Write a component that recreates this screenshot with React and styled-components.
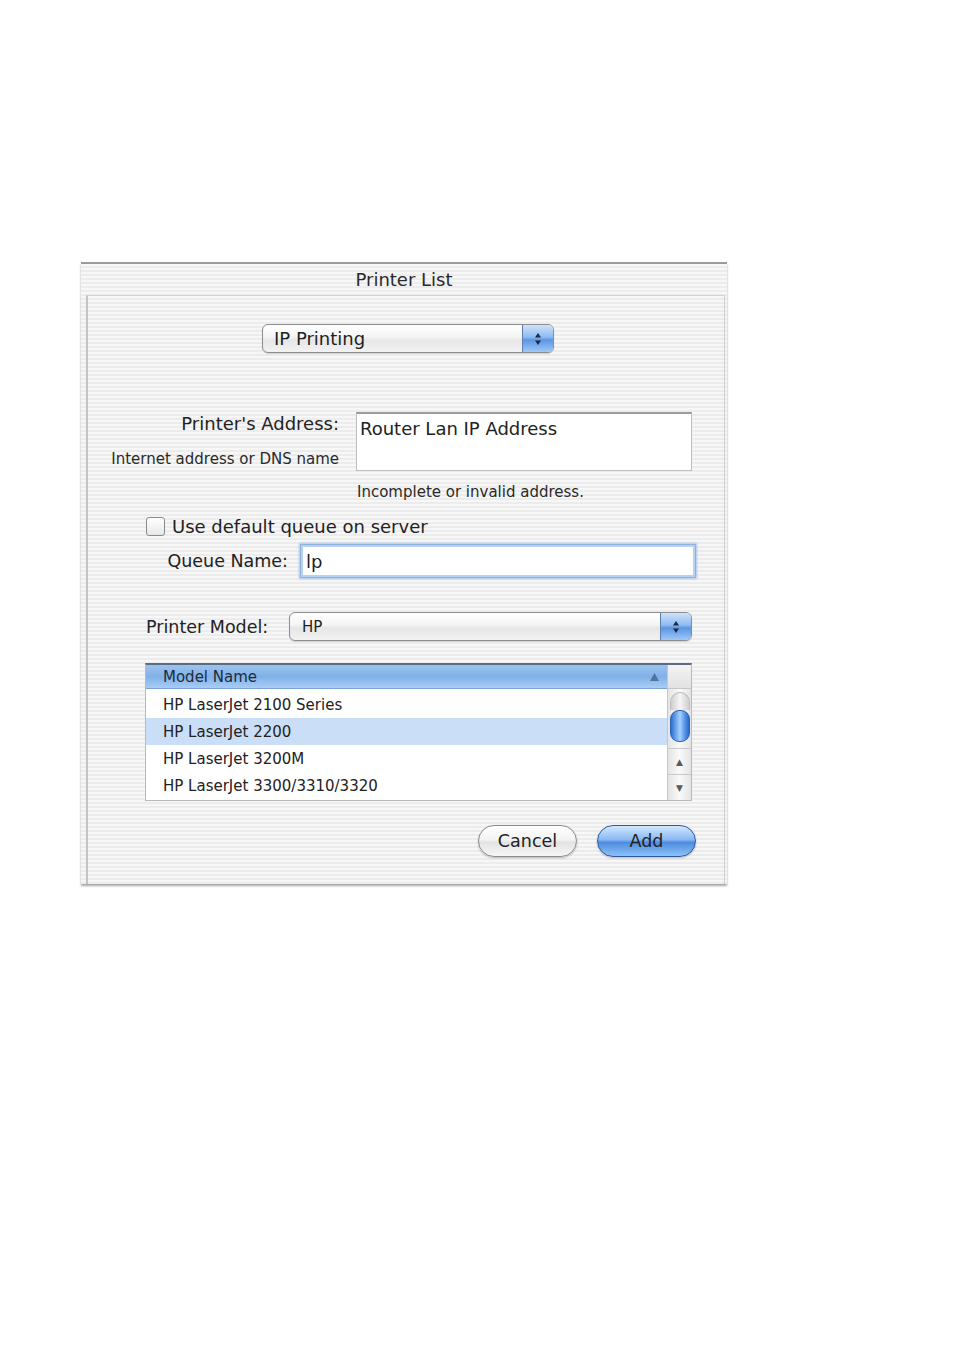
import React from "react";
import styled, { createGlobalStyle } from "styled-components";

const Global = createGlobalStyle`
  html, body { margin: 0; padding: 0; background: #ffffff; }
  body { font-family: "DejaVu Sans", "Liberation Sans", sans-serif; color: #1e1e1e; }
`;

const pinstripe = `repeating-linear-gradient(180deg, #f7f7f7 0px, #f7f7f7 2px, #ececec 2px, #ececec 4px)`;

const Page = styled.div`
  width: 954px;
  height: 1355px;
  padding-top: 262px;
  padding-left: 81px;
  box-sizing: border-box;
`;

const Window = styled.div`
  width: 646px;
  background: ${pinstripe};
  border-top: 2px solid #9a9a9a;
  box-shadow: 0 2px 2px rgba(0,0,0,0.35);
  display: flex;
  flex-direction: column;
`;

const TitleBar = styled.div`
  height: 31px;
  display: flex;
  align-items: center;
  justify-content: center;
  font-size: 18px;
  color: #2a2a2a;
  box-sizing: border-box;
`;

const Sheet = styled.div`
  margin: 0 2px 0 5px;
  border-left: 2px solid #c4c4c4;
  border-right: 1px solid #cfcfcf;
  border-top: 1px solid #d2d2d2;
  display: flex;
  flex-direction: column;
  padding-bottom: 27px;
`;

const PopupRow = styled.div`
  display: flex;
  margin-top: ${p => p.$top}px;
  padding-left: ${p => p.$left}px;
`;

const Popup = styled.div`
  width: ${p => p.$w}px;
  height: 29px;
  box-sizing: border-box;
  border: 1px solid #8d8d8d;
  border-radius: 6px;
  background: linear-gradient(180deg, #ffffff 0%, #f4f4f4 45%, #e6e6e6 55%, #f2f2f2 100%);
  display: flex;
  align-items: center;
  font-size: ${p => p.$fs || 18}px;
  padding-left: ${p => p.$pl || 11}px;
  overflow: hidden;
  box-shadow: 0 1px 1px rgba(0,0,0,0.15);
`;

const PopupText = styled.span`
  flex: 1;
`;

const Stepper = styled.div`
  width: 30px;
  height: 100%;
  border-left: 1px solid #5a7fb0;
  background: linear-gradient(180deg, #cfe3fb 0%, #8fbaf0 45%, #5b95e2 55%, #9fc8f6 100%);
  display: flex;
  align-items: center;
  justify-content: center;
`;

const AddressGroup = styled.div`
  display: flex;
  margin-top: 59px;
`;

const LabelCol = styled.div`
  width: ${p => p.$w}px;
  display: flex;
  flex-direction: column;
  align-items: flex-end;
  margin-right: ${p => p.$gap}px;
`;

const Label = styled.div`
  font-size: 18px;
  line-height: 24px;
  color: #222;
  white-space: nowrap;
`;

const SmallLabel = styled.div`
  font-size: 15px;
  line-height: 18px;
  color: #2a2a2a;
  white-space: nowrap;
  margin-top: ${p => p.$top || 0}px;
  padding-left: ${p => p.$left || 0}px;
`;

const TextArea = styled.div`
  width: 336px;
  height: 59px;
  box-sizing: border-box;
  background: #fff;
  border: 1px solid #bdbdbd;
  border-top: 2px solid #9c9c9c;
  font-size: 18px;
  padding: 4px 0 0 3px;
  color: #222;
`;

const CheckRow = styled.div`
  display: flex;
  align-items: center;
  margin-top: 16px;
  padding-left: 58px;
  height: 19px;
`;

const CheckBox = styled.div`
  width: 19px;
  height: 19px;
  box-sizing: border-box;
  border: 1px solid #8a8a8a;
  border-radius: 3px;
  background: linear-gradient(180deg, #ffffff, #e8e8e8);
  margin-right: 7px;
`;

const CheckText = styled.span`
  font-size: 18px;
  color: #222;
`;

const FieldRow = styled.div`
  display: flex;
  align-items: center;
  margin-top: ${p => p.$top}px;
  padding-left: ${p => p.$left || 0}px;
`;

const RightLabel = styled.div`
  width: ${p => p.$w}px;
  text-align: ${p => p.$align || "right"};
  margin-right: ${p => p.$gap}px;
  font-size: ${p => p.$fs || 18}px;
  color: #222;
  white-space: nowrap;
`;

const FocusField = styled.div`
  width: 396px;
  height: 34px;
  box-sizing: border-box;
  background: #fff;
  border: 1px solid #8fb2dd;
  box-shadow: inset 0 0 0 2px #b7d2f1, 0 0 2px 1px #a9c6ea;
  font-size: 18px;
  display: flex;
  align-items: center;
  padding-left: 5px;
  color: #222;
`;

const Table = styled.div`
  margin-top: 22px;
  margin-left: 57px;
  width: 547px;
  height: 138px;
  box-sizing: border-box;
  border: 1px solid #b9b9b9;
  border-top: 2px solid #5b6d85;
  display: grid;
  grid-template-columns: 1fr 24px;
  grid-template-rows: 24px 1fr;
  background: #fff;
`;

const HeaderCell = styled.div`
  background: linear-gradient(180deg, #9cc3ee 0%, #80b1e8 50%, #a9cdf4 100%);
  border-bottom: 1px solid #7aa3d4;
  display: flex;
  align-items: center;
  padding-left: 17px;
  padding-right: 8px;
  font-size: 15px;
  color: #1f2a38;
`;

const HeaderText = styled.span`
  flex: 1;
`;

const Corner = styled.div`
  background: linear-gradient(180deg, #f4f4f4, #e2e2e2);
  border-left: 1px solid #c7c7c7;
  border-bottom: 1px solid #c7c7c7;
`;

const Rows = styled.div`
  display: flex;
  flex-direction: column;
  padding-top: 2px;
`;

const Row = styled.div`
  height: 27px;
  display: flex;
  align-items: center;
  padding-left: 17px;
  font-size: 15px;
  color: #222;
  background: ${p => (p.$sel ? "#cadff7" : "#ffffff")};
`;

const ScrollBar = styled.div`
  border-left: 1px solid #c7c7c7;
  background: linear-gradient(90deg, #e4e4e4, #fafafa 50%, #e4e4e4);
  display: flex;
  flex-direction: column;
`;

const Track = styled.div`
  flex: 1;
  display: flex;
  flex-direction: column;
  align-items: center;
  padding-top: 3px;
`;

const TrackCap = styled.div`
  width: 20px;
  height: 18px;
  border-radius: 10px 10px 0 0;
  background: linear-gradient(90deg, #cfcfcf, #f6f6f6 50%, #cfcfcf);
  border: 1px solid #bdbdbd;
  border-bottom: none;
  box-sizing: border-box;
`;

const Thumb = styled.div`
  width: 20px;
  height: 32px;
  border-radius: 9px;
  box-sizing: border-box;
  border: 1px solid #2d62b6;
  background: linear-gradient(90deg, #2f6fd0 0%, #7fb4f3 35%, #a8d0fb 50%, #5d99e8 75%, #2a67c7 100%);
`;

const ArrowBtn = styled.div`
  height: 25px;
  display: flex;
  align-items: center;
  justify-content: center;
  border-top: 1px solid #c9c9c9;
  font-size: 9px;
  color: #5a5a5a;
`;

const ButtonRow = styled.div`
  display: flex;
  justify-content: flex-end;
  gap: 20px;
  margin-top: 24px;
  padding-right: 28px;
`;

const PillButton = styled.div`
  width: 99px;
  height: 32px;
  box-sizing: border-box;
  border-radius: 16px;
  display: flex;
  align-items: center;
  justify-content: center;
  font-size: 17.5px;
  color: #222;
  border: 1px solid ${p => (p.$primary ? "#2e5a9c" : "#8c8c8c")};
  background: ${p =>
    p.$primary
      ? "linear-gradient(180deg, #d2e7ff 0%, #8ab9f0 45%, #4f8ce0 55%, #8cc1f7 100%)"
      : "linear-gradient(180deg, #ffffff 0%, #f3f3f3 45%, #e3e3e3 55%, #f7f7f7 100%)"};
  box-shadow: 0 1px 2px rgba(0,0,0,0.25);
`;

const StepIcon = () => (
  <svg width="10" height="16" viewBox="0 0 10 16">
    <path d="M5 2 L8 6.5 L2 6.5 Z" fill="#1d2b40" />
    <path d="M5 14 L8 9.5 L2 9.5 Z" fill="#1d2b40" />
  </svg>
);

const models = [
  { name: "HP LaserJet 2100 Series" },
  { name: "HP LaserJet 2200", sel: true },
  { name: "HP LaserJet 3200M" },
  { name: "HP LaserJet 3300/3310/3320" },
];

export default function App() {
  return (
    <>
      <Global />
      <Page>
        <Window>
          <TitleBar>Printer List</TitleBar>
          <Sheet>
            <PopupRow $top={28} $left={174}>
              <Popup $w={292}>
                <PopupText>IP Printing</PopupText>
                <Stepper><StepIcon /></Stepper>
              </Popup>
            </PopupRow>

            <AddressGroup>
              <LabelCol $w={251} $gap={17}>
                <Label>Printer's Address:</Label>
                <SmallLabel $top={14}>Internet address or DNS name</SmallLabel>
              </LabelCol>
              <TextArea>Router Lan IP Address</TextArea>
            </AddressGroup>
            <SmallLabel $top={12} $left={269}>Incomplete or invalid address.</SmallLabel>

            <CheckRow>
              <CheckBox />
              <CheckText>Use default queue on server</CheckText>
            </CheckRow>

            <FieldRow $top={8}>
              <RightLabel $w={200} $gap={12} $fs={17.5}>Queue Name:</RightLabel>
              <FocusField>lp</FocusField>
            </FieldRow>

            <FieldRow $top={34} $left={58}>
              <RightLabel $w={143} $gap={0} $align="left" $fs={17.5}>Printer Model:</RightLabel>
              <Popup $w={403} $fs={15} $pl={12}>
                <PopupText>HP</PopupText>
                <Stepper><StepIcon /></Stepper>
              </Popup>
            </FieldRow>

            <Table>
              <HeaderCell>
                <HeaderText>Model Name</HeaderText>
                <svg width="9" height="8" viewBox="0 0 9 8"><path d="M4.5 0 L9 8 L0 8 Z" fill="#51749e" /></svg>
              </HeaderCell>
              <Corner />
              <Rows>
                {models.map(m => (
                  <Row key={m.name} $sel={m.sel}>{m.name}</Row>
                ))}
              </Rows>
              <ScrollBar>
                <Track>
                  <TrackCap />
                  <Thumb />
                </Track>
                <ArrowBtn>▲</ArrowBtn>
                <ArrowBtn>▼</ArrowBtn>
              </ScrollBar>
            </Table>

            <ButtonRow>
              <PillButton>Cancel</PillButton>
              <PillButton $primary>Add</PillButton>
            </ButtonRow>
          </Sheet>
        </Window>
      </Page>
    </>
  );
}
